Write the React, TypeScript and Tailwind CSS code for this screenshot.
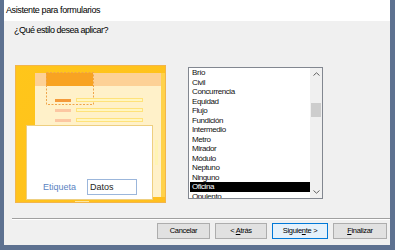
const STYLES = [
  "Brío",
  "Civil",
  "Concurrencia",
  "Equidad",
  "Flujo",
  "Fundición",
  "Intermedio",
  "Metro",
  "Mirador",
  "Módulo",
  "Neptuno",
  "Ninguno",
  "Oficina",
  "Opulento",
];

const SELECTED = "Oficina";

const Preview = () => {
  return (
    <div className="relative w-[151px] h-[138px] shrink-0">
      {/* background art of the style preview */}
      <svg
        className="absolute inset-0"
        width="151"
        height="138"
        viewBox="0 0 151 138"
      >
        <defs>
          <linearGradient id="frame" x1="0" y1="0" x2="1" y2="1">
            <stop offset="0" stopColor="#ffc61a" />
            <stop offset="1" stopColor="#ffbf1f" />
          </linearGradient>
        </defs>
        <rect x="0.5" y="0.5" width="150" height="137" fill="url(#frame)" stroke="#f3b54a" />
        <rect x="20" y="8" width="126" height="124" fill="#fff1c9" />
        <rect x="146" y="8" width="4" height="124" fill="#ffd24a" />
        <rect x="20" y="8" width="126" height="13" fill="#fdd196" />
        <rect x="31" y="8" width="47" height="13" fill="#f8a322" />
        <rect
          x="31.5"
          y="7.5"
          width="47"
          height="32"
          fill="none"
          stroke="#efa54a"
          strokeDasharray="2 1.5"
        />
        <rect x="40" y="34" width="16" height="3" fill="#f49a3a" />
        <rect x="40" y="44" width="16" height="3" fill="#fcc7a2" />
        <rect x="40" y="54" width="16" height="3" fill="#fcc7a2" />
        <rect x="61.5" y="33.5" width="66" height="3" fill="#fff6c2" stroke="#ffe27a" />
        <rect x="61.5" y="43.5" width="66" height="3" fill="#fff6c2" stroke="#ffe27a" />
        <rect x="61.5" y="53.5" width="66" height="3" fill="#fff6c2" stroke="#ffe27a" />
        <rect x="140" y="75" width="3" height="25" fill="#fff4b4" />
        <rect x="60" y="136" width="14" height="1" fill="#fde7a0" />
      </svg>
      <div className="relative ml-[11px] mt-[60px] w-[127px] h-[75px] bg-white border border-[#eecf80] flex items-end pb-[4px] pl-[16px]">
        <span className="text-[9px] leading-[16px] text-[#5b84c2] font-['Liberation_Sans',sans-serif]">
          Etiqueta
        </span>
        <div className="ml-[11px] w-[50px] h-[16px] border border-[#9bb6db] pl-[2px] text-[9px] leading-[14px] text-[#1e1e1e] font-['Liberation_Sans',sans-serif]">
          Datos
        </div>
      </div>
    </div>
  );
};

const StyleList = () => {
  return (
    <div className="ml-[22px] mt-[2px] w-[135px] h-[132px] border border-[#828790] bg-white flex">
      <div className="flex-1 overflow-hidden flex flex-col pl-[1px]">
        {STYLES.map((s) => (
          <div
            key={s}
            className={
              s === SELECTED
                ? "h-[9.5px] shrink-0 pl-[2px] text-[8px] leading-[9.5px] tracking-[-0.4px] bg-black text-white"
                : "h-[9.5px] shrink-0 pl-[2px] text-[8px] leading-[9.5px] tracking-[-0.4px] text-[#111]"
            }
          >
            {s}
          </div>
        ))}
      </div>
      <div className="w-[12px] bg-[#f0f0f0] flex flex-col items-center">
        <div className="h-[12px] flex items-center justify-center">
          <svg width="7" height="4" viewBox="0 0 7 4">
            <path d="M0.5 3.5 L3.5 0.8 L6.5 3.5" fill="none" stroke="#606060" strokeWidth="1" />
          </svg>
        </div>
        <div className="mt-[23px] w-[10px] h-[14px] bg-[#cdcdcd]" />
        <div className="flex-1" />
        <div className="h-[12px] flex items-center justify-center">
          <svg width="7" height="4" viewBox="0 0 7 4">
            <path d="M0.5 0.5 L3.5 3.2 L6.5 0.5" fill="none" stroke="#606060" strokeWidth="1" />
          </svg>
        </div>
      </div>
    </div>
  );
};

const Btn = ({
  w,
  focused,
  children,
}: {
  w: string;
  focused?: boolean;
  children: React.ReactNode;
}) => (
  <div
    className={
      focused
        ? `${w} h-[16px] border border-[#0078d7] bg-[#e5f1fb] flex items-center justify-center text-[7.5px] tracking-[-0.3px] text-black`
        : `${w} h-[16px] border border-[#adadad] bg-[#e1e1e1] flex items-center justify-center text-[7.5px] tracking-[-0.3px] text-black`
    }
  >
    <span className="whitespace-pre">{children}</span>
  </div>
);

export default function App() {
  return (
    <div className="w-[395px] h-[250px] flex flex-col bg-[#f0f0f0] border-l-[4px] border-r-[5px] border-b-[5px] border-[#5d7190] font-['Liberation_Sans',sans-serif] overflow-hidden">
      <div className="h-[21px] shrink-0 bg-white flex items-center pl-[2px] text-[9px] tracking-[-0.4px] text-black">
        Asistente para formularios
      </div>
      <div className="flex flex-col pl-[10px] pt-[4px]">
        <div className="h-[10px] text-[9px] leading-[10px] tracking-[-0.5px] text-black">
          ¿Qué estilo desea aplicar?
        </div>
        <div className="flex items-start mt-[30px] ml-[1px]">
          <Preview />
          <StyleList />
        </div>
        <div className="mt-[15px] -ml-[2px] h-[2px] border-t border-[#a0a0a0] bg-white" />
        <div className="mt-[3px] flex justify-end gap-[5px] pr-[3px]">
          <Btn w="w-[53px]">Cancelar</Btn>
          <Btn w="w-[52px]">
            {"< "}
            <span className="underline">A</span>
            {"trás"}
          </Btn>
          <Btn w="w-[56px]" focused>
            {"Siguie"}
            <span className="underline">n</span>
            {"te >"}
          </Btn>
          <Btn w="w-[54px]">
            <span className="underline">F</span>
            {"inalizar"}
          </Btn>
        </div>
      </div>
    </div>
  );
}
